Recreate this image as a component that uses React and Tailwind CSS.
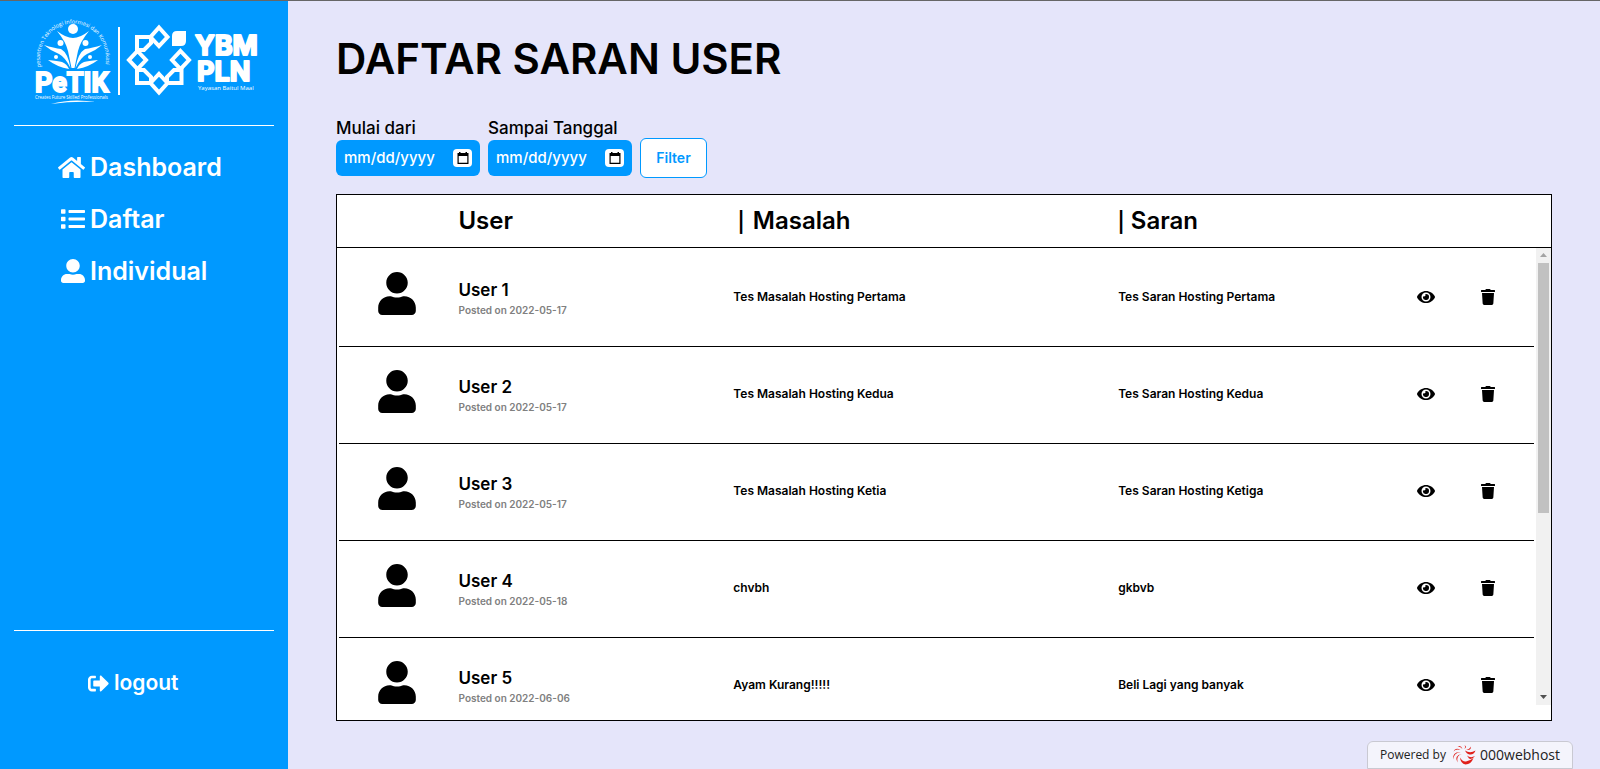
import { useRef } from "react";
import { FaHome, FaList, FaUserAlt, FaUser, FaEye, FaTrash, FaSignOutAlt } from "react-icons/fa";

const users = [
  { name: "User 1", date: "2022-05-17", masalah: "Tes Masalah Hosting Pertama", saran: "Tes Saran Hosting Pertama" },
  { name: "User 2", date: "2022-05-17", masalah: "Tes Masalah Hosting Kedua", saran: "Tes Saran Hosting Kedua" },
  { name: "User 3", date: "2022-05-17", masalah: "Tes Masalah Hosting Ketia", saran: "Tes Saran Hosting Ketiga" },
  { name: "User 4", date: "2022-05-18", masalah: "chvbh", saran: "gkbvb" },
  { name: "User 5", date: "2022-06-06", masalah: "Ayam Kurang!!!!!", saran: "Beli Lagi yang banyak" },
];

function PetikLogo() {
  return (
    <svg viewBox="0 0 78 92" className="h-[92px] w-[78px] overflow-visible" fill="#fff" fontFamily="'Open Sans', sans-serif" role="img" aria-label="PeTIK">
      <defs>
        <path id="petik-arc" d="M7 52 A33 35 0 1 1 71 52" />
      </defs>
      <text fontSize="5.500"><textPath href="#petik-arc">pesantren Teknologi Informasi dan Komunikasi</textPath></text>
      <circle cx="39" cy="14" r="5" />
      <circle cx="26.500" cy="28" r="3" />
      <circle cx="51.500" cy="28" r="3" />
      <circle cx="22" cy="42" r="2" />
      <circle cx="56" cy="42" r="2" />
      <path d="M23 16 Q32 23 39 23 Q46 23 55 16 Q46 27 44 36 L40.500 53 H37.500 L34 36 Q32 27 23 16Z" />
      <path d="M10 30 Q20 33 27 34 Q34 38 36.500 53 Q31 42 25 39 Q17 36 10 30Z" />
      <path d="M68 30 Q58 33 51 34 Q44 38 41.500 53 Q47 42 53 39 Q61 36 68 30Z" />
      <path d="M14 45 Q24 46 28 47 Q33 49 35 54 Q23 52 14 45Z" />
      <path d="M64 45 Q54 46 50 47 Q45 49 43 54 Q55 52 64 45Z" />
      <text x="1" y="77" fontSize="27" fontWeight="700" fontFamily="Roboto, sans-serif" stroke="#fff" strokeWidth="1.800">PeTIK</text>
      <text x="1" y="84" fontSize="4.400">Creates Future Skilled Professionals</text>
      <path d="M17 89 Q38 83 62 87 Q38 86 17 89Z" />
    </svg>
  );
}

function YbmLogo() {
  return (
    <svg viewBox="0 0 134 74" className="h-[74px] w-[134px]" fontFamily="Inter, sans-serif" role="img" aria-label="YBM PLN">
      <g fill="none" stroke="#fff" strokeWidth="4">
        <path d="M33 4.500 L41.500 14 L33 23 L24.500 14Z" />
        <path d="M33 51 L41.500 60 L33 69.500 L24.500 60Z" />
        <path d="M11.500 28 L20 37 L11.500 46 L3 37Z" />
        <path d="M54.500 28 L63 37 L54.500 46 L46 37Z" />
        <path d="M25 14 H11 V27 H18 L25 20Z" />
        <path d="M18 47 H11 V60 H25 V54 L18 47Z" />
        <path d="M48 47 H55.500 V60 H41 V54 L48 47Z" />
      </g>
      <path d="M51 8 H60 V18 Q60 23 55 23 H46 V13 Q46 8 51 8Z" fill="#fff" />
      <g fill="#fff" stroke="#fff" strokeWidth="2" strokeLinejoin="round" fontWeight="700">
        <text x="69" y="32" fontSize="27">YBM</text>
        <text x="71" y="58" fontSize="27">PLN</text>
      </g>
      <text x="72" y="67" fontSize="6" fill="#fff" fontFamily="'Open Sans', sans-serif">Yayasan Baitul Maal</text>
    </svg>
  );
}

function DateField({ id, label }) {
  return (
    <div className="mb-0.5 flex w-36 flex-col">
      <label htmlFor={id} className="text-[17px] leading-6 font-medium whitespace-nowrap">{label}</label>
      <div className="flex h-9 items-center justify-between rounded-md bg-[#0099ff] px-2">
        <input id={id} type="text" placeholder="mm/dd/yyyy" className="w-24 bg-transparent text-[15px] font-medium text-white outline-none placeholder:text-white" />
        <button type="button" aria-label={"Pilih tanggal " + label} className="flex h-[18px] w-[19px] items-center justify-center rounded-sm bg-white">
          <svg viewBox="0 0 12 12" className="size-3" aria-hidden="true">
            <path fillRule="evenodd" fill="#000" d="M2 0h1.500v1h5V0H10v1h1.500v11H.5V1H2ZM1.700 4v6.800h8.600V4Z" />
          </svg>
        </button>
      </div>
    </div>
  );
}

function WebhostMark() {
  return (
    <svg viewBox="0 0 24 20" className="h-5 w-6" fill="#e0201b" aria-hidden="true">
      <path d="M13 5.500 Q18 9 23.500 5.500 Q22 10 17.500 9.500 Q14.500 9 13 5.500Z" />
      <path d="M21.500 13 Q19 19.500 13.500 19.500 Q8.500 18.500 8 12.500 Q10.500 17 14 16.500 Q17.500 16 21.500 13Z" />
      <path d="M15 10.500 Q18.500 13.500 23 11 Q20 15 17 13.500Z" />
      <path d="M10 9 Q4 10 5.500 17.500 Q1.500 10.500 10 9Z" />
      <path d="M8.500 7 Q2 7.500 1 14.500 Q.5 6.500 8.500 7Z" />
      <path d="M8.500 5 Q4 3.500 1.500 6.500 Q3.500 1.800 8.500 5Z" />
      <path d="M10.500 4 Q8.500 1.200 5.500 1.500 Q9 0 10.500 4Z" />
      <path d="M12.500 4 Q14 1.500 12.500 .3 Q15.500 1.500 12.500 4Z" />
      <path d="M14 4.800 Q18 4.500 18.500 1.500 Q20 5.500 14 4.800Z" />
    </svg>
  );
}

const navItems = [
  { label: "Dashboard", Icon: FaHome, size: "size-[27px]" },
  { label: "Daftar", Icon: FaList, size: "size-6" },
  { label: "Individual", Icon: FaUserAlt, size: "size-6" },
];

export default function App() {
  const listRef = useRef(null);
  const scroll = (top) => listRef.current.scrollBy({ top, behavior: "smooth" });
  return (
    <div className="flex min-h-screen border-t border-[#666] bg-[#e5e5fa] font-['Inter',sans-serif] text-black">
      <aside className="flex w-[18%] shrink-0 flex-col bg-[#0099ff] px-3.5 text-white">
        <div className="flex h-[125px] items-start gap-1.5 border-b border-white pt-3.5 pl-5">
          <PetikLogo />
          <div className="mt-3 h-[68px] w-0.5 shrink-0 bg-white" />
          <div className="mt-2"><YbmLogo /></div>
        </div>
        <nav className="flex flex-col gap-4 pt-[23px] pl-11">
          {navItems.map(({ label, Icon, size }) => (
            <a key={label} href="#" className="flex items-center gap-[5px] text-[25px] leading-9 font-semibold">
              <span className="flex w-[27px] justify-end"><Icon className={size} /></span>
              {label}
            </a>
          ))}
        </nav>
        <div className="mt-auto flex h-[139px] items-start border-t border-white pt-9 pl-[74px]">
          <a href="#" className="flex items-center gap-[5px] text-[21px] leading-8 font-semibold">
            <FaSignOutAlt />
            logout
          </a>
        </div>
      </aside>

      <main className="flex grow flex-col px-12 pt-8">
        <h1 className="text-[42px] leading-[52px] font-semibold">DAFTAR SARAN USER</h1>
        <form className="mt-[31px] flex items-end gap-2" onSubmit={(e) => e.preventDefault()}>
          <DateField id="mulai" label="Mulai dari" />
          <DateField id="sampai" label="Sampai Tanggal" />
          <button type="submit" className="h-10 w-[67px] rounded-md border border-[#0099ff] bg-white text-sm font-semibold text-[#0099ff]">Filter</button>
        </form>

        <section className="mt-4 border border-black bg-white pb-[15px]">
          <table className="w-full table-fixed border-b border-black text-left">
            <colgroup>
              <col className="w-[10%]" />
              <col className="w-[23%]" />
              <col className="w-[31.3%]" />
              <col />
            </colgroup>
            <thead>
              <tr className="h-[52px] text-2xl">
                <td />
                <th className="font-semibold">User</th>
                <th className="font-semibold"><span className="mr-2 text-xl">|</span>Masalah</th>
                <th className="font-semibold"><span className="mr-1.5 text-xl">|</span>Saran</th>
              </tr>
            </thead>
          </table>
          <div className="flex h-[457px]">
            <div ref={listRef} className="grow overflow-y-auto p-0.5 [scrollbar-width:none]">
              <table className="w-full table-fixed text-left" aria-label="Daftar saran">
                <colgroup>
                  <col className="w-[10%]" />
                  <col className="w-[23%]" />
                  <col className="w-[32.2%]" />
                  <col className="w-[25%]" />
                  <col className="w-[5.3%]" />
                  <col className="w-[4.5%]" />
                </colgroup>
                <tbody>
                  {users.map((u) => (
                    <tr key={u.name} className="h-[97px] border-b border-black text-xs font-semibold">
                      <td className="pr-1 pb-2"><FaUser className="mx-auto h-[43px] w-[38px]" /></td>
                      <td>
                        <div className="text-[17px] leading-6">{u.name}</div>
                        <div className="text-[10px] leading-4 text-[#808080]">Posted on {u.date}</div>
                      </td>
                      <td className="pb-0.5">{u.masalah}</td>
                      <td className="pb-0.5">{u.saran}</td>
                      <td className="pb-0.5"><button type="button" aria-label={"Lihat " + u.name} className="block"><FaEye className="size-4.5" /></button></td>
                      <td className="pb-0.5"><button type="button" aria-label={"Hapus " + u.name} className="block"><FaTrash className="size-4" /></button></td>
                    </tr>
                  ))}
                </tbody>
              </table>
            </div>
            <div className="flex w-[15px] shrink-0 flex-col items-center bg-[#f1f1f1]">
              <button type="button" aria-label="Gulir ke atas" onClick={() => scroll(-97)} className="flex h-[15px] w-full items-center justify-center">
                <svg viewBox="0 0 7 4" className="h-1 w-[7px]" fill="#a3a3a3"><path d="M0 4 3.500 0 7 4Z" /></svg>
              </button>
              <div className="h-[250px] w-[11px] bg-[#c1c1c1]" />
              <button type="button" aria-label="Gulir ke bawah" onClick={() => scroll(97)} className="mt-auto flex h-[15px] w-full items-center justify-center">
                <svg viewBox="0 0 7 4" className="h-1 w-[7px]" fill="#505050"><path d="M0 0H7L3.500 4Z" /></svg>
              </button>
            </div>
          </div>
        </section>
      </main>

      <a
        href="#"
        className="fixed right-[27px] bottom-0 flex h-7 w-[206px] items-center justify-between rounded-t-md border border-[#c9c9d2] bg-[#f4f4fc] px-3 font-['Open_Sans',sans-serif] text-[#222]"
      >
        <span className="text-xs">Powered by</span>
        <span className="flex items-center gap-1 text-sm">
          <WebhostMark />
          000webhost
        </span>
      </a>
    </div>
  );
}
